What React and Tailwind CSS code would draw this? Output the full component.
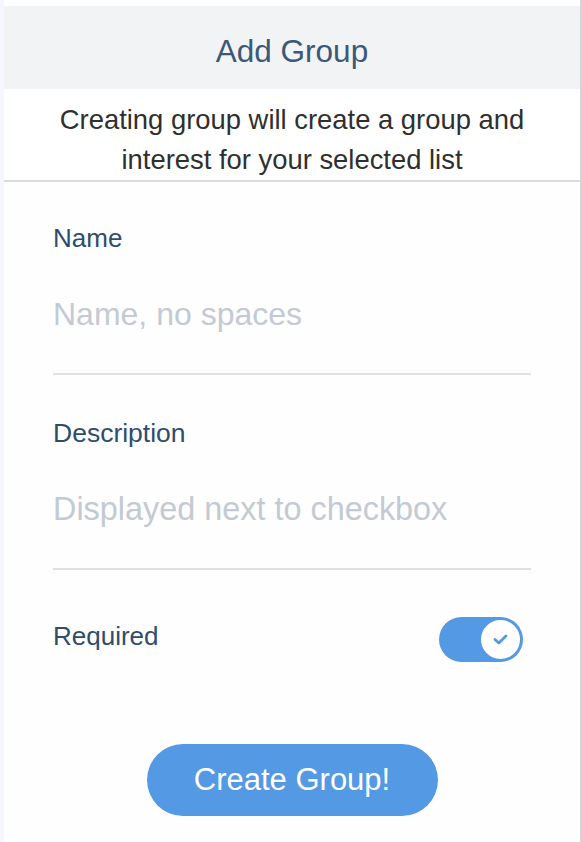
import React from "react";

export default function App() {
  const font = { fontFamily: '"Liberation Sans", Arial, sans-serif' };
  return (
    <div className="flex w-[582px] h-[842px] bg-white" style={font}>
      <div className="w-[4px] h-full bg-[#f4f8fe]" />
      <div className="w-[576px] h-full flex flex-col bg-[#fefefe]">
        <div className="h-[6px] bg-white" />
        <div className="h-[83px] bg-[#f2f3f5] flex items-center justify-center pt-[6px]">
          <h1 className="text-[31.5px] leading-[40px] text-[#3c5878]">Add Group</h1>
        </div>
        <div className="pt-[11px] border-b-2 border-[#d8dce2] text-center text-[27.4px] leading-[40px] text-[#2f2f2f] bg-white">
          <p>Creating group will create a group and</p>
          <p>interest for your selected list</p>
        </div>
        <div className="px-[49px] flex flex-col">
          <label className="mt-[41px] text-[26px] leading-[30px] text-[#2f4d6b]">Name</label>
          <input
            className="mt-[42px] w-full h-[80px] pb-[40px] border-b-2 border-[#dde1e6] bg-transparent outline-none text-[32px] leading-[40px] text-[#2f4d6b] placeholder:text-[#c3cad3]"
            placeholder="Name, no spaces"
          />
          <label className="mt-[43px] text-[26.5px] leading-[30px] text-[#2f4d6b]">Description</label>
          <input
            className="mt-[42px] w-full h-[80px] pb-[40px] border-b-2 border-[#dde1e6] bg-transparent outline-none text-[32.4px] leading-[40px] text-[#2f4d6b] placeholder:text-[#c3cad3]"
            placeholder="Displayed next to checkbox"
          />
          <div className="mt-[47px] flex items-start justify-between">
            <span className="mt-[4px] text-[26px] leading-[30px] text-[#2f4d6b]">Required</span>
            <div className="mr-[8px] w-[84px] h-[45px] rounded-full bg-[#5499e3] flex items-center justify-end pr-[1px]">
              <div className="w-[43px] h-[43px] rounded-full bg-white border-2 border-[#5499e3] flex items-center justify-center">
                <svg width="15" height="11" viewBox="0 0 15 11" fill="none">
                  <path d="M2 5.5 L5.8 9 L13 2" stroke="#5499e3" strokeWidth="2.8" strokeLinecap="round" strokeLinejoin="round" />
                </svg>
              </div>
            </div>
          </div>
          <button className="mt-[82px] mx-auto w-[291px] h-[72px] rounded-full bg-[#5499e3] text-white text-[31px] leading-[40px]">
            Create Group!
          </button>
        </div>
      </div>
      <div className="w-[2px] h-full bg-[#d2d5da]" />
    </div>
  );
}
